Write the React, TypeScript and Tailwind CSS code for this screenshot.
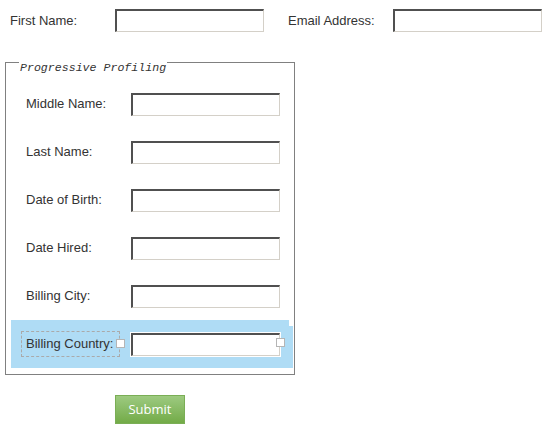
import React from 'react';

const inputCls =
  'block w-[149px] h-[23px] bg-white border-t-2 border-l-2 border-b border-r border-t-[#505050] border-l-[#505050] border-b-[#d4d0c8] border-r-[#d4d0c8] outline-none';

const rows = ['Middle Name:', 'Last Name:', 'Date of Birth:', 'Date Hired:', 'Billing City:'];

const Handle: React.FC<{ className: string }> = ({ className }) => (
  <span className={`absolute w-[9px] h-[9px] bg-white border border-[#b5b5b5] ${className}`} />
);

export default function App() {
  return (
    <div className="w-[551px] h-[437px] bg-white text-[13px] text-[#333] font-['Liberation_Sans',Arial,sans-serif]">
      <div className="flex items-center pt-[9px]">
        <div className="flex items-center pl-[10px]">
          <label className="w-[105px]">First Name:</label>
          <input className={inputCls} />
        </div>
        <div className="flex items-center pl-[24px]">
          <label className="w-[105px]">Email Address:</label>
          <input className={inputCls} />
        </div>
      </div>

      <fieldset className="mt-[18px] ml-[5px] w-[290px] border border-[#808080] pb-[6px]">
        <legend className="ml-[13px] px-[1px] pt-[12px] leading-[12px] text-[11.6px] italic text-[#333] font-['Liberation_Mono','Courier_New',monospace]">
          Progressive Profiling
        </legend>
        <div className="pt-[6px] px-[5px]">
          {rows.map((r) => (
            <div key={r} className="flex items-center h-[48px] pl-[15px]">
              <label className="w-[105px]">{r}</label>
              <input className={inputCls} />
            </div>
          ))}
          <div className="relative flex items-center h-[48px] pl-[15px] bg-[#afdcf5]">
            <span className="absolute right-[-4px] top-[6px] bottom-0 w-[4px] bg-[#afdcf5]" />
            <label className="relative flex items-center w-[105px] h-[26px]">
              <span className="absolute left-[-5px] right-[11px] top-0 bottom-0 border border-dashed border-[#aaaaaa]" />
              <span className="relative">Billing Country:</span>
              <Handle className="right-[6px] top-[8px]" />
            </label>
            <div className="relative">
              <input className={`${inputCls} ring-1 ring-white`} />
              <Handle className="right-[-5px] top-[5px]" />
            </div>
          </div>
        </div>
      </fieldset>

      <div className="pl-[115px] mt-[20px]">
        <button className="w-[70px] h-[29px] text-white text-[13px] font-['Open_Sans',sans-serif] bg-gradient-to-b from-[#9dca80] to-[#73ab47] border border-[#7aae55]">
          Submit
        </button>
      </div>
    </div>
  );
}
